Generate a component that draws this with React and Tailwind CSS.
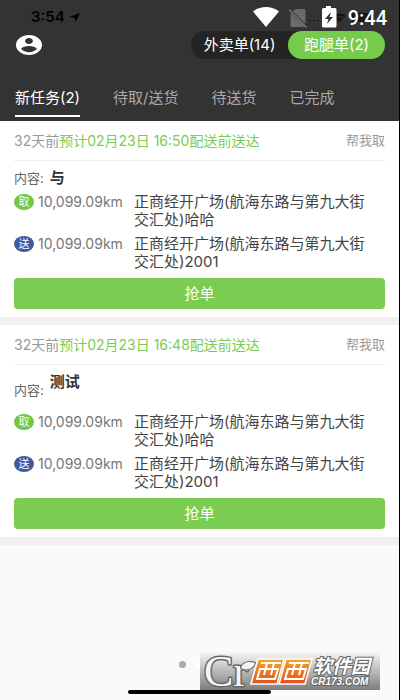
import { useState } from 'react';

const orders = [
  { id: 1, deadline: '预计02月23日 16:50配送前送达', content: '与', tall: false },
  { id: 2, deadline: '预计02月23日 16:48配送前送达', content: '测试', tall: true },
];

const tabs = ['新任务(2)', '待取/送货', '待送货', '已完成'];

function StatusBar() {
  return (
    <div className="relative h-[31px] pl-[31px] pt-[9px] flex items-start gap-1">
      <span className="text-[15px] leading-4 font-semibold text-black">3:54</span>
      <svg className="mt-1 w-[11px] h-[9px]" viewBox="0 0 11 9" fill="#000">
        <path d="M11 0 6.6 9 5.6 4.9 0 4.1z" />
      </svg>
      <div className="absolute right-3 top-1 flex items-start">
        <svg className="w-[138px] h-6" viewBox="0 0 138 24">
          <g fill="#161616">
            <rect x="59" y="16" width="2" height="1" />
            <rect x="63" y="16" width="2" height="1" />
            <rect x="67" y="16" width="2" height="1" />
            <path d="M83 12a9 7 0 0 1 13 0l-1.500 1.500a7 5 0 0 0-10 0zM85.500 14.500a6 4 0 0 1 8 0L89.500 18z" />
            <rect x="102" y="9" width="22" height="9" rx="2" />
          </g>
          <path d="M3 7.500C10 1.500 22 1.500 29 7.500L16 23z" fill="#fff" />
          <path d="M46 5h8q1.500 0 1.500 1.500V20L42.500 7zM40.500 9 55 23H42q-1.500 0-1.500-1.500z" fill="#6a6a6a" />
          <path d="M39 5.500 56.500 23.500" stroke="#777" strokeWidth="1.500" />
          <path d="M76 2h5v2h4q1.500 0 1.500 1.500V22q0 1.500-1.500 1.500H73.500Q72 23.500 72 22V5.500Q72 4 73.500 4H76z" fill="#fff" />
          <path d="m81 8-6 7h3.500L77 20l6-7h-3.500z" fill="#333" />
        </svg>
        <span className="-ml-10 pt-1 text-xl leading-5 font-medium text-white font-['Roboto',sans-serif]">9:44</span>
      </div>
    </div>
  );
}

function Stop({ label, color, children }) {
  return (
    <div className="flex items-start">
      <span className={`mt-px w-5 h-4 rounded-[50%] text-white text-[11px] leading-4 text-center ${color}`}>{label}</span>
      <span className="w-[100px] pl-1 text-sm leading-[18px] text-[#777]">10,099.09km</span>
      <p className="flex-1 pr-2 text-[15px] leading-[18px] text-[#444]">{children}</p>
    </div>
  );
}

function OrderCard({ order }) {
  return (
    <article className="bg-white px-[14px] pb-2 border-b-8 border-[#f0f0f0]">
      <div className="h-10 flex items-center justify-between border-b border-[#eee]">
        <p className="text-sm text-[#999]">
          32天前<span className="text-[#79cd50]">{order.deadline}</span>
        </p>
        <span className="text-[13px] text-[#999]">帮我取</span>
      </div>
      <div className={order.tall ? 'h-12 pt-2 flex items-start gap-[6px]' : 'h-8 pt-2 flex items-start gap-[6px]'}>
        <span className={order.tall ? 'pt-2 text-[13px] leading-[18px] text-[#666]' : 'text-[13px] leading-[18px] text-[#666]'}>内容:</span>
        <strong className="text-[15px] leading-[18px] font-bold text-[#333]">{order.content}</strong>
      </div>
      <div className="flex flex-col gap-[6px]">
        <Stop label="取" color="bg-[#6fc744]">正商经开广场(航海东路与第九大街交汇处)哈哈</Stop>
        <Stop label="送" color="bg-[#43599d]">正商经开广场(航海东路与第九大街交汇处)2001</Stop>
      </div>
      <button type="button" className="mt-[7px] w-full h-[31px] rounded bg-[#7acd50] text-white text-[15px] leading-[31px]">
        抢单
      </button>
    </article>
  );
}

function SiteLogo() {
  return (
    <svg className="absolute right-[19px] bottom-0 w-[180px] h-[59px]" viewBox="0 -10 180 59">
      <defs>
        <linearGradient id="shade" x1="0" y1="0" x2="0" y2="1">
          <stop offset="0" stopColor="#fafafa" />
          <stop offset="1" stopColor="#7d7d7d" />
        </linearGradient>
        <linearGradient id="orange" x1="0" y1="0" x2="0" y2="1">
          <stop offset="0" stopColor="#f6a52c" />
          <stop offset="1" stopColor="#e2501c" />
        </linearGradient>
      </defs>
      <rect width="180" height="39" fill="url(#shade)" />
      <g fill="#f4f4f4" stroke="#666" strokeWidth="3" paintOrder="stroke" strokeLinejoin="round">
        <text x="4" y="35" fontSize="44" fontFamily="Liberation Serif, serif">Cr</text>
        <path d="M41 17c2-6 8-7 14-5-2 6-9 8-14 5z" strokeWidth="2" />
      </g>
      <g fill="url(#orange)" stroke="#fff" strokeWidth="1.500">
        <path d="M58 8h26l-7 25H51z" />
        <path d="M86 8h26l-7 25H79z" />
      </g>
      <g fill="none" stroke="#fff" strokeWidth="2">
        <path d="M61 12h20M60 18h18l-3 10H57zM67 12l-3 12M74 12l-3 12" />
        <path d="M89 12h20M88 18h18l-3 10H85zM95 12l-3 12M102 12l-3 12" />
      </g>
      <g fill="#fff" stroke="#666" strokeWidth="2" paintOrder="stroke" fontWeight="700" fontStyle="italic">
        <text x="113" y="22" fontSize="19" fontFamily="Noto Sans CJK SC, sans-serif">软件园</text>
        <text x="111" y="34" fontSize="10" fontFamily="Liberation Sans, sans-serif">CR173.COM</text>
      </g>
    </svg>
  );
}

export default function App() {
  const [mode, setMode] = useState('run');
  const [active, setActive] = useState(tabs[0]);

  return (
    <div className="min-h-screen flex flex-col bg-[#fafafa] border-r border-black font-['Inter','Noto_Sans_CJK_SC',sans-serif]">
      <header className="bg-[#333]">
        <StatusBar />
        <div className="h-7 pl-4 pr-[14px] flex items-center justify-between">
          <button type="button" aria-label="个人中心">
            <svg className="w-[26px] h-5" viewBox="2 2 20 20" preserveAspectRatio="none" fill="#fff">
              <path d="M12 2C6.480 2 2 6.480 2 12s4.480 10 10 10 10-4.480 10-10S17.520 2 12 2zm0 3c1.660 0 3 1.340 3 3s-1.340 3-3 3-3-1.340-3-3 1.340-3 3-3zm0 14.200c-2.500 0-4.710-1.280-6-3.220.030-1.990 4-3.080 6-3.080 1.990 0 5.970 1.090 6 3.080-1.290 1.940-3.500 3.220-6 3.220z" />
            </svg>
          </button>
          <div className="flex rounded-full bg-[#242424] text-[15px] leading-7 text-white">
            <button type="button" onClick={() => setMode('food')} className={mode === 'food' ? 'w-[97px] rounded-full bg-[#76cb4c]' : 'w-[97px] rounded-full'}>
              外卖单(14)
            </button>
            <button type="button" onClick={() => setMode('run')} className={mode === 'run' ? 'w-[97px] rounded-full bg-[#76cb4c]' : 'w-[97px] rounded-full'}>
              跑腿单(2)
            </button>
          </div>
        </div>
        <nav className="h-[62px] pl-[15px] pb-1 flex items-end gap-[33px] text-[15px]">
          {tabs.map((tab) => (
            <button
              key={tab}
              type="button"
              onClick={() => setActive(tab)}
              className={tab === active ? 'h-7 pb-2 leading-[18px] border-b-2 border-white text-white' : 'h-7 pb-2 leading-[18px] border-b-2 border-transparent text-[#aaa]'}
            >
              {tab}
            </button>
          ))}
        </nav>
      </header>
      <main>
        {orders.map((order) => (
          <OrderCard key={order.id} order={order} />
        ))}
      </main>
      <footer className="relative mt-auto pt-10 pb-[6px] flex flex-col items-center gap-[22px]">
        <div className="flex gap-[10px]">
          <i className="size-[7px] rounded-full bg-[#aaa]" />
          <i className="size-[7px] rounded-full bg-white" />
          <i className="size-[7px] rounded-full bg-white" />
        </div>
        <SiteLogo />
        <div className="relative w-[143px] h-1 rounded-full bg-black" />
      </footer>
    </div>
  );
}
